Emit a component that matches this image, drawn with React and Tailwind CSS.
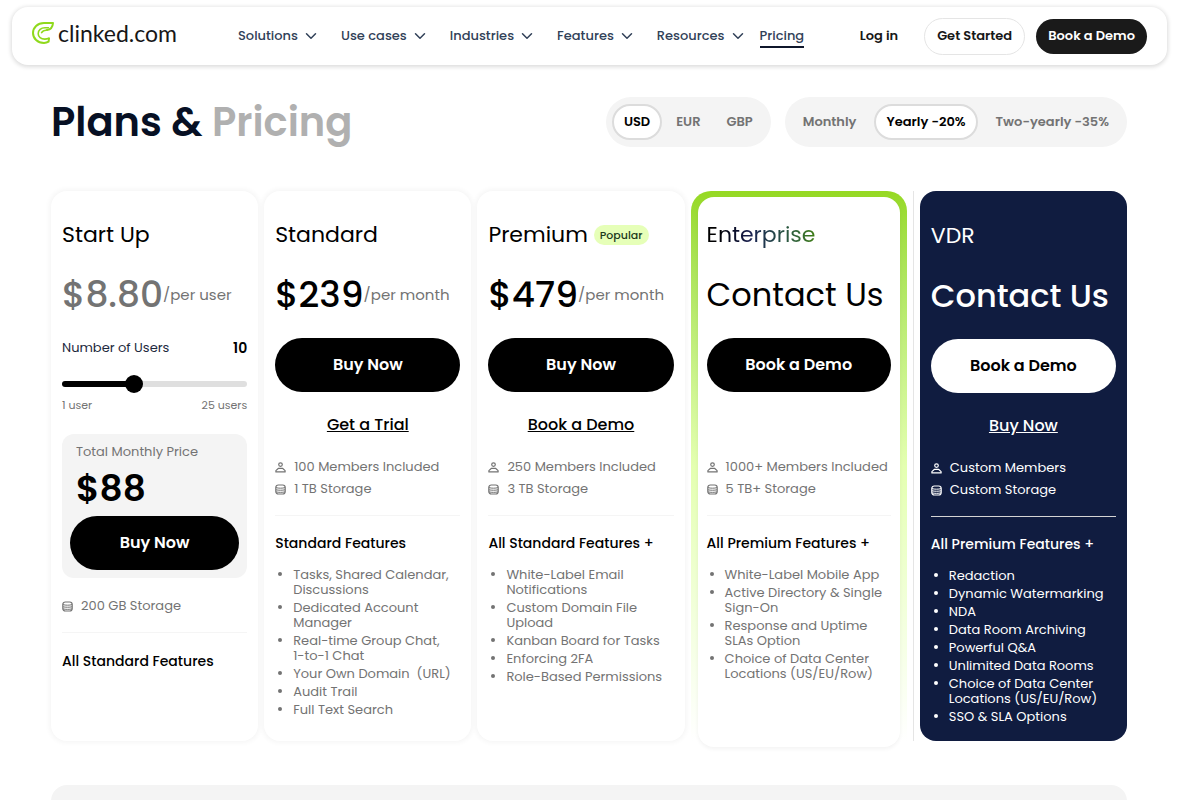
import React, { useState } from 'react';
import { ChevronDown } from 'lucide-react';

const menu = ['Solutions', 'Use cases', 'Industries', 'Features', 'Resources'];
const currencies = ['USD', 'EUR', 'GBP'];
const periods = ['Monthly', 'Yearly -20%', 'Two-yearly -35%'];

const Logo = () => (
  <a href="#home" className="mb-1.5 flex items-center gap-1 font-[Lato,sans-serif] text-[23px] leading-7 text-neutral-900">
    <svg width="22" height="22" viewBox="0 0 22 22" fill="none" stroke="#8fd91c" strokeWidth="2" strokeLinejoin="round" strokeLinecap="round">
      <path d="M17 16.500l-.4 3.200C15.200 20.600 13.800 21 12 21 5.600 21 1 16.600 1 11S5.500 1 12 1h9c-.3 4.200-2.300 6.600-6 7" />
      <path d="M17 16.300c-1.400.5-2.800.8-4.200.8-3.800 0-6.600-2.200-6.600-5.400 0-3.600 2.800-5.900 6.800-5.900h3.400" strokeWidth="1.600" />
      <path d="M15 8c-2.800.4-4.600 1-5.400 2.600" strokeWidth="1.600" />
    </svg>
    <span>clinked.com</span>
  </a>
);

const MemberIcon = () => (
  <svg width="11" height="11" viewBox="0 0 11 11" fill="none" stroke="currentColor" strokeWidth="1.200" className="shrink-0">
    <circle cx="5.500" cy="2.600" r="1.800" />
    <path d="M3.500 6.300h4l2.600 2.300v1.300H.9V8.600z" strokeLinejoin="round" />
  </svg>
);

const StorageIcon = () => (
  <svg width="11" height="11" viewBox="0 0 11 11" fill="none" stroke="currentColor" className="shrink-0">
    <rect x=".8" y="1" width="9.400" height="9" rx="2.500" strokeWidth="1.200" />
    <path d="M1 3.600c2.500.8 6.500.8 9 0M1 5.800c2.500.6 6.500.6 9 0M1 7.900c2.500.6 6.500.6 9 0" />
  </svg>
);

const Switcher = ({ label, options, value, onChange, gap }) => (
  <div role="group" aria-label={label} className={`flex items-center rounded-full bg-[#f4f4f4] px-1.5 py-[7px] ${gap}`}>
    {options.map((option) => (
      <button
        key={option}
        onClick={() => onChange(option)}
        aria-pressed={value === option}
        className={`h-9 rounded-full border-2 px-[10px] text-[13px] font-semibold whitespace-nowrap ${value === option ? 'border-[#dcdcdc] bg-white text-black' : 'border-transparent text-neutral-500'}`}
      >
        {option}
      </button>
    ))}
  </div>
);

const Action = ({ children, light }) => (
  <button className={`h-[54px] w-full rounded-full text-base font-semibold ${light ? 'bg-white text-black' : 'bg-black text-white'}`}>
    {children}
  </button>
);

const Facts = ({ members, storage, dark }) => (
  <ul className={`space-y-0.5 text-[13px] leading-5 whitespace-nowrap ${dark ? 'text-white' : 'text-neutral-500'}`}>
    {members && <li className="flex items-center gap-2"><MemberIcon />{members}</li>}
    <li className="flex items-center gap-2"><StorageIcon />{storage}</li>
  </ul>
);

const PlanBody = ({ plan }) => {
  const { name, badge, price, unit, action, link, members, storage, title, features, dark, fade } = plan;
  return (
    <>
      <div className="flex h-8 items-center gap-1.5">
        <h2 className={`text-[22px] leading-8 ${fade ? 'bg-linear-to-r from-black via-[#1a2050] via-40% to-[#3f7d10] bg-clip-text text-transparent' : ''}`}>{name}</h2>
        {badge && <span className="rounded-full bg-[#e6ffb8] px-1.5 text-[11px] leading-5 font-medium text-[#1c3a1c]">{badge}</span>}
      </div>
      <div className="mt-[21px] flex h-[46px] items-center whitespace-nowrap">
        <span className={unit ? 'text-[36px] font-medium' : `text-[32px] ${dark ? 'font-medium' : ''}`}>{price}</span>
        {unit && <span className="text-[15px] text-neutral-500">{unit}</span>}
      </div>
      <div className="mt-5"><Action light={dark}>{action}</Action></div>
      <div className="mt-[21px] mb-5 h-6 text-center">
        {link && <a href="#plan" className="text-base leading-6 font-medium underline">{link}</a>}
      </div>
      <Facts members={members} storage={storage} dark={dark} />
      <hr className={`mt-4 ${dark ? 'border-neutral-300' : 'border-neutral-100'}`} />
      <h3 className="mt-[15px] text-sm leading-6 font-medium">{title}</h3>
      <ul className={`mt-3 space-y-[3px] text-[13px] leading-[15px] ${dark ? 'text-white' : 'text-neutral-500'}`}>
        {features.map((feature) => (
          <li key={feature} className="flex">
            <span className="mt-[5px] mr-[11px] ml-[3px] size-1 shrink-0 rounded-full bg-current"></span>
            <span className="whitespace-pre">{feature}</span>
          </li>
        ))}
      </ul>
    </>
  );
};

const plans = {
  standard: {
    name: 'Standard', price: '$239', unit: '/per month', action: 'Buy Now', link: 'Get a Trial',
    members: '100 Members Included', storage: '1 TB Storage', title: 'Standard Features',
    features: ['Tasks, Shared Calendar,\nDiscussions', 'Dedicated Account\nManager', 'Real-time Group Chat,\n1-to-1 Chat', 'Your Own Domain  (URL)', 'Audit Trail', 'Full Text Search'],
  },
  premium: {
    name: 'Premium', badge: 'Popular', price: '$479', unit: '/per month', action: 'Buy Now', link: 'Book a Demo',
    members: '250 Members Included', storage: '3 TB Storage', title: 'All Standard Features +',
    features: ['White-Label Email\nNotifications', 'Custom Domain File\nUpload', 'Kanban Board for Tasks', 'Enforcing 2FA', 'Role-Based Permissions'],
  },
  enterprise: {
    name: 'Enterprise', fade: true, price: 'Contact Us', action: 'Book a Demo',
    members: '1000+ Members Included', storage: '5 TB+ Storage', title: 'All Premium Features +',
    features: ['White-Label Mobile App', 'Active Directory & Single\nSign-On', 'Response and Uptime\nSLAs Option', 'Choice of Data Center\nLocations (US/EU/Row)'],
  },
  vdr: {
    name: 'VDR', dark: true, price: 'Contact Us', action: 'Book a Demo', link: 'Buy Now',
    members: 'Custom Members', storage: 'Custom Storage', title: 'All Premium Features +',
    features: ['Redaction', 'Dynamic Watermarking', 'NDA', 'Data Room Archiving', 'Powerful Q&A', 'Unlimited Data Rooms', 'Choice of Data Center\nLocations (US/EU/Row)', 'SSO & SLA Options'],
  },
};

const StartUp = () => {
  const [users, setUsers] = useState(10);
  const fill = ((users - 1) / 24) * 100;

  return (
    <>
      <h2 className="text-[22px] leading-8">Start Up</h2>
      <div className="mt-[21px] flex h-[46px] items-center whitespace-nowrap text-neutral-500">
        <span className="text-[36px] font-medium">$8.80</span>
        <span className="text-[15px]">/per user</span>
      </div>
      <div className="mt-5 flex items-center justify-between leading-5">
        <label htmlFor="users" className="text-[13px] text-slate-800">Number of Users</label>
        <output htmlFor="users" className="text-sm font-semibold">{users}</output>
      </div>
      <input
        id="users"
        type="range"
        min="1"
        max="25"
        value={users}
        onChange={(e) => setUsers(Number(e.target.value))}
        style={{ '--fill': `${fill}%` }}
        className="mt-[17px] block h-[18px] w-full appearance-none bg-transparent [&::-webkit-slider-runnable-track]:h-1.5 [&::-webkit-slider-runnable-track]:rounded-full [&::-webkit-slider-runnable-track]:bg-[linear-gradient(to_right,#000_var(--fill),#dfdfdf_var(--fill))] [&::-webkit-slider-thumb]:-mt-1.5 [&::-webkit-slider-thumb]:size-[18px] [&::-webkit-slider-thumb]:appearance-none [&::-webkit-slider-thumb]:rounded-full [&::-webkit-slider-thumb]:bg-black"
      />
      <div className="mt-1 flex justify-between text-[11px] leading-4 text-neutral-500">
        <span>1 user</span>
        <span>25 users</span>
      </div>
      <div className="mt-[21px] rounded-xl bg-[#f4f4f4] px-2 pt-2 pb-2">
        <p className="px-1.5 text-[13px] leading-5 text-neutral-500">Total Monthly Price</p>
        <p className="mt-1 px-1.5 text-[36px] leading-[46px] font-semibold">$88</p>
        <div className="mt-1"><Action>Buy Now</Action></div>
      </div>
      <div className="mt-[18px]"><Facts storage="200 GB Storage" /></div>
      <hr className="mt-4 border-neutral-100" />
      <h3 className="mt-4 text-sm leading-6 font-medium">All Standard Features</h3>
    </>
  );
};

const card = 'rounded-2xl bg-white px-[11px] pt-7 shadow-[0_0_5px_2px_rgba(0,0,0,0.04)]';

export default function App() {
  const [currency, setCurrency] = useState('USD');
  const [period, setPeriod] = useState('Yearly -20%');

  return (
    <div className="h-screen overflow-hidden bg-white font-[Poppins,Inter,sans-serif] text-black">
      <header className="mt-[7px] mr-[17px] ml-3 flex h-[58px] items-center rounded-2xl bg-white px-5 shadow-[0_1px_4px_1px_rgba(0,0,0,0.14)]">
        <Logo />
        <nav className="ml-[61px] flex items-center gap-[21px] text-[13px] font-medium text-slate-700">
          {menu.map((item) => (
            <button key={item} className="flex items-center gap-1 whitespace-nowrap">
              {item}
              <ChevronDown size={18} strokeWidth={2} />
            </button>
          ))}
          <a href="#pricing" className="-ml-2 border-y-2 border-t-transparent border-b-slate-900">Pricing</a>
        </nav>
        <div className="ml-auto flex items-center text-[13px] font-semibold whitespace-nowrap text-neutral-900">
          <a href="#login">Log in</a>
          <button className="ml-[26px] h-[37px] rounded-full border border-neutral-200 px-3">Get Started</button>
          <button className="ml-[11px] h-[35px] rounded-full bg-[#1a1a1a] px-3 text-white">Book a Demo</button>
        </div>
      </header>

      <main className="mr-[57px] ml-[51px]">
        <div className="mt-8 flex items-center">
          <h1 className="text-[40px] leading-[50px] font-semibold text-[#071024]">Plans & <span className="text-[#b0b0b0]">Pricing</span></h1>
          <div className="ml-auto flex gap-[14px]">
            <Switcher label="Currency" options={currencies} value={currency} onChange={setCurrency} gap="gap-0.5" />
            <Switcher label="Billing period" options={periods} value={period} onChange={setPeriod} gap="gap-1.5" />
          </div>
        </div>

        <div className="mt-11 grid min-h-[550px] grid-cols-[207fr_207fr_207fr_216fr_1px_207fr] gap-1.5">
          <section className={card}><StartUp /></section>
          <section className={card}><PlanBody plan={plans.standard} /></section>
          <section className={card}><PlanBody plan={plans.premium} /></section>
          <div className="flex flex-col rounded-t-[20px] bg-linear-to-b from-[#96d922] via-[#e4ffb0] via-50% to-white px-[7px] pt-1.5">
            <section className="-mb-1.5 flex-1 rounded-2xl bg-white px-[9px] pt-[22px] shadow-[0_2px_4px_rgba(0,0,0,0.05)]"><PlanBody plan={plans.enterprise} /></section>
          </div>
          <div className="bg-neutral-200"></div>
          <section className="rounded-2xl bg-[#101c40] px-[11px] pt-[29px] text-white"><PlanBody plan={plans.vdr} /></section>
        </div>

        <div className="mt-11 h-10 rounded-t-2xl bg-[#f4f4f4]"></div>
      </main>
    </div>
  );
}
